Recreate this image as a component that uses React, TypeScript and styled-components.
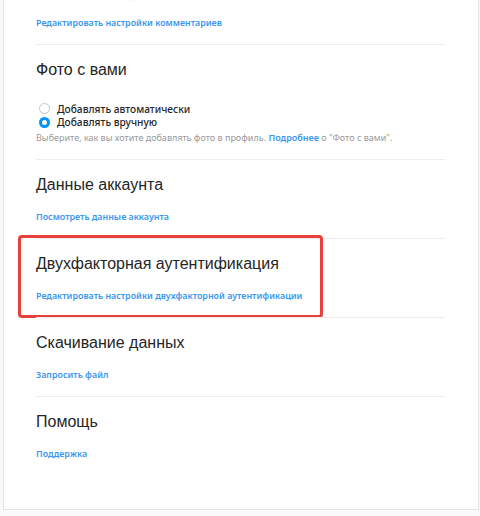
import React, { useState } from 'react'
import styled, { createGlobalStyle } from 'styled-components'

const GlobalStyle = createGlobalStyle`
    html, body {
        margin: 0;
        padding: 0;
        background: #fafafa;
        font-family: "Noto Sans", "Open Sans", Arial, sans-serif;
        overflow: hidden;
    }
`

const StyledPage = styled.div`
    height: 516px;
    padding-left: 3px;
`

const StyledCard = styled.div`
    width: 476px;
    height: 510px;
    box-sizing: border-box;
    background: white;
    border: 1px solid #e3e3e3;
    border-top: none;
    overflow: hidden;
`

const StyledSection = styled.section<{ $first?: boolean }>`
    position: relative;
    margin: 0 33px 0 32px;
    padding: ${(p) => (p.$first ? '0 0 14px' : '13px 0 14px')};
    border-top: ${(p) => (p.$first ? 'none' : '1px solid #ececec')};
`

const StyledTitle = styled.h2`
    margin: 0;
    font-family: "Liberation Sans", Arial, sans-serif;
    font-size: 16px;
    line-height: 24px;
    font-weight: 400;
    color: #262626;
`

const StyledLink = styled.a`
    display: block;
    margin-top: 13px;
    font-size: 8.9px;
    line-height: 14px;
    font-weight: 600;
    color: #3897f0;
    text-decoration: none;
    cursor: pointer;
`

const StyledHint = styled.p<{ $cut?: boolean }>`
    margin: ${(p) => (p.$cut ? '-11px 0 0' : '2px 0 0')};
    font-size: 9px;
    line-height: 14px;
    color: #999999;

    > a {
        color: #3897f0;
        font-weight: 600;
        text-decoration: none;
    }
`

const StyledRadioList = styled.div`
    display: flex;
    flex-direction: column;
    margin-top: 20px;
    padding-left: 3px;
`

const StyledRadioRow = styled.label`
    display: flex;
    align-items: center;
    gap: 7px;
    height: 13.5px;
    font-size: 10.2px;
    font-weight: 500;
    color: #262626;
    cursor: pointer;
`

const StyledRadio = styled.span<{ $checked: boolean }>`
    width: 11px;
    height: 11px;
    box-sizing: border-box;
    border-radius: 50%;
    border: ${(p) => (p.$checked ? '3.5px solid #0095f6' : '1px solid #c7c7c7')};
    background: white;
    flex-shrink: 0;
`

const StyledHighlight = styled.div`
    position: absolute;
    top: -4px;
    left: -18px;
    width: 305px;
    height: 83px;
    box-sizing: border-box;
    border: 3px solid #e8413b;
    border-radius: 4px;
    pointer-events: none;
`

type LinkSection = {
    title: string
    link: string
    highlighted?: boolean
}

const sections: LinkSection[] = [
    { title: 'Данные аккаунта', link: 'Посмотреть данные аккаунта' },
    {
        title: 'Двухфакторная аутентификация',
        link: 'Редактировать настройки двухфакторной аутентификации',
        highlighted: true,
    },
    { title: 'Скачивание данных', link: 'Запросить файл' },
    { title: 'Помощь', link: 'Поддержка' },
]

const photoOptions = ['Добавлять автоматически', 'Добавлять вручную']

const App = () => {
    const [photoMode, setPhotoMode] = useState(1)

    return (
        <StyledPage>
            <GlobalStyle />
            <StyledCard>
                <StyledSection $first>
                    <StyledHint $cut>Все пользователи, подписчики</StyledHint>
                    <StyledLink>Редактировать настройки комментариев</StyledLink>
                </StyledSection>

                <StyledSection>
                    <StyledTitle>Фото с вами</StyledTitle>
                    <StyledRadioList>
                        {photoOptions.map((option, i) => (
                            <StyledRadioRow key={option} onClick={() => setPhotoMode(i)}>
                                <StyledRadio $checked={photoMode === i} />
                                {option}
                            </StyledRadioRow>
                        ))}
                    </StyledRadioList>
                    <StyledHint>
                        Выберите, как вы хотите добавлять фото в профиль. <a>Подробнее</a> о "Фото с вами".
                    </StyledHint>
                </StyledSection>

                {sections.map((item) => (
                    <StyledSection key={item.title}>
                        {item.highlighted && <StyledHighlight />}
                        <StyledTitle>{item.title}</StyledTitle>
                        <StyledLink>{item.link}</StyledLink>
                    </StyledSection>
                ))}
            </StyledCard>
        </StyledPage>
    )
}

export default App
